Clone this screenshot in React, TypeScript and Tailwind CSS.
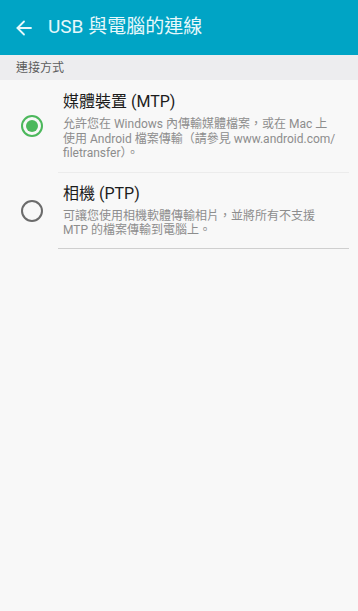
import React from "react";

const font = { fontFamily: 'Roboto, "Noto Sans CJK TC", sans-serif' };

function Radio({ checked }: { checked: boolean }) {
  return (
    <div
      className={`w-[22px] h-[22px] rounded-full border-2 flex items-center justify-center shrink-0 ${
        checked ? "border-[#4cb85c]" : "border-[#6b6b6b]"
      }`}
    >
      {checked && <div className="w-[12px] h-[12px] rounded-full bg-[#4cb85c]" />}
    </div>
  );
}

function Option({
  title,
  lines,
  checked,
  last,
}: {
  title: string;
  lines: string[];
  checked: boolean;
  last?: boolean;
}) {
  return (
    <div className="flex items-center">
      <div className="w-[58px] pl-[21px] shrink-0">
        <Radio checked={checked} />
      </div>
      <div
        className={`flex-1 mr-[9px] pl-[5px] border-b ${
          last ? "border-[#cfcfcf] pt-[11px] pb-[10px]" : "border-[#ececec] pt-[12px] pb-[11px]"
        }`}
      >
        <div className="text-[16px] leading-[20px] text-[#1c1c1c]">{title}</div>
        <div className="mt-[5px] text-[12px] leading-[14.5px] text-[#8d8d8d]">
          {lines.map((l, i) => (
            <div key={i} className="whitespace-nowrap">
              {l}
            </div>
          ))}
        </div>
      </div>
    </div>
  );
}

export default function App() {
  return (
    <div lang="zh-Hant" className="w-[358px] h-[611px] bg-[#f8f8f8] flex flex-col" style={font}>
      <div className="h-[55px] bg-[#00a4c5] flex items-center shrink-0">
        <div className="w-[48px] pl-[16px] flex items-center">
          <svg width="16" height="16" viewBox="0 0 16 16" fill="none" stroke="#e6f8fb" strokeWidth="1.8" strokeLinecap="round" strokeLinejoin="round">
            <path d="M15 8H1.5" />
            <path d="M8 1.5L1.5 8L8 14.5" />
          </svg>
        </div>
        <div className="text-[19px] text-[#e6f8fb]">USB 與電腦的連線</div>
      </div>
      <div className="h-[25px] bg-[#ededef] flex items-center pl-[16px] text-[12px] text-[#5c5c5c] shrink-0">
        連接方式
      </div>
      <Option
        checked
        title="媒體裝置 (MTP)"
        lines={[
          "允許您在 Windows 內傳輸媒體檔案，或在 Mac 上",
          "使用 Android 檔案傳輸（請參見 www.android.com/",
          "filetransfer）。",
        ]}
      />
      <Option
        checked={false}
        last
        title="相機 (PTP)"
        lines={["可讓您使用相機軟體傳輸相片，並將所有不支援", "MTP 的檔案傳輸到電腦上。"]}
      />
    </div>
  );
}
